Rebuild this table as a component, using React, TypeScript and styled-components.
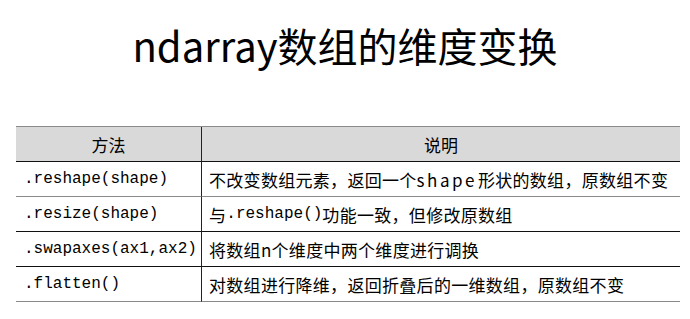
import React from "react";
import styled, { createGlobalStyle } from "styled-components";

const Global = createGlobalStyle`
  html, body { margin: 0; padding: 0; background: #ffffff; }
  body { font-family: "Noto Sans CJK SC", "Noto Sans", sans-serif; color: #000; }
`;

const Page = styled.div`
  width: 690px;
  height: 319px;
  display: flex;
  flex-direction: column;
  align-items: center;
  overflow: hidden;
`;

const Title = styled.h1`
  margin: 22px 0 0 0;
  height: 46px;
  line-height: 46px;
  font-size: 40px;
  font-weight: 400;
  font-family: "Noto Sans CJK SC", sans-serif;
  color: #000;
`;

const Table = styled.div`
  margin: 58px 0 0 6px;
  width: 664px;
  display: grid;
  grid-template-columns: 186px 478px;
  border-top: 1px solid #8a8a8a;
`;

const HeadCell = styled.div<{ $first?: boolean }>`
  height: 34px;
  background: #d9d9d9;
  display: flex;
  align-items: center;
  justify-content: center;
  font-size: 17px;
  border-bottom: 1px solid #111;
  border-right: ${(p) => (p.$first ? "1px solid #222" : "none")};
`;

const CodeCell = styled.div<{ $line: string }>`
  height: 34px;
  display: flex;
  align-items: center;
  padding-left: 8px;
  font-family: "Liberation Mono", "DejaVu Sans Mono", monospace;
  font-size: 16px;
  border-right: 1px solid #222;
  border-bottom: 1px solid ${(p) => p.$line};
  white-space: nowrap;
`;

const DescCell = styled.div<{ $line: string }>`
  height: 34px;
  display: flex;
  align-items: center;
  padding-left: 7px;
  font-size: 17px;
  letter-spacing: 0.3px;
  border-bottom: 1px solid ${(p) => p.$line};
  white-space: nowrap;
`;

const Latin = styled.span`
  letter-spacing: 2.5px;
  margin-right: 1px;
`;

const Code = styled.span`
  font-family: "Liberation Mono", "DejaVu Sans Mono", monospace;
  font-size: 16px;
  letter-spacing: 0;
`;

const rows: { code: string; desc: React.ReactNode; line: string }[] = [
  {
    code: ".reshape(shape)",
    desc: (
      <>
        不改变数组元素，返回一个<Latin>shape</Latin>形状的数组，原数组不变
      </>
    ),
    line: "#8a8a8a",
  },
  {
    code: ".resize(shape)",
    desc: (
      <>
        与<Code>.reshape()</Code>功能一致，但修改原数组
      </>
    ),
    line: "#111",
  },
  {
    code: ".swapaxes(ax1,ax2)",
    desc: <>将数组n个维度中两个维度进行调换</>,
    line: "#111",
  },
  {
    code: ".flatten()",
    desc: <>对数组进行降维，返回折叠后的一维数组，原数组不变</>,
    line: "#8a8a8a",
  },
];

export default function App() {
  return (
    <>
      <Global />
      <Page>
        <Title>ndarray数组的维度变换</Title>
        <Table>
          <HeadCell $first>方法</HeadCell>
          <HeadCell>说明</HeadCell>
          {rows.map((r) => (
            <React.Fragment key={r.code}>
              <CodeCell $line={r.line}>{r.code}</CodeCell>
              <DescCell $line={r.line}>{r.desc}</DescCell>
            </React.Fragment>
          ))}
        </Table>
      </Page>
    </>
  );
}
